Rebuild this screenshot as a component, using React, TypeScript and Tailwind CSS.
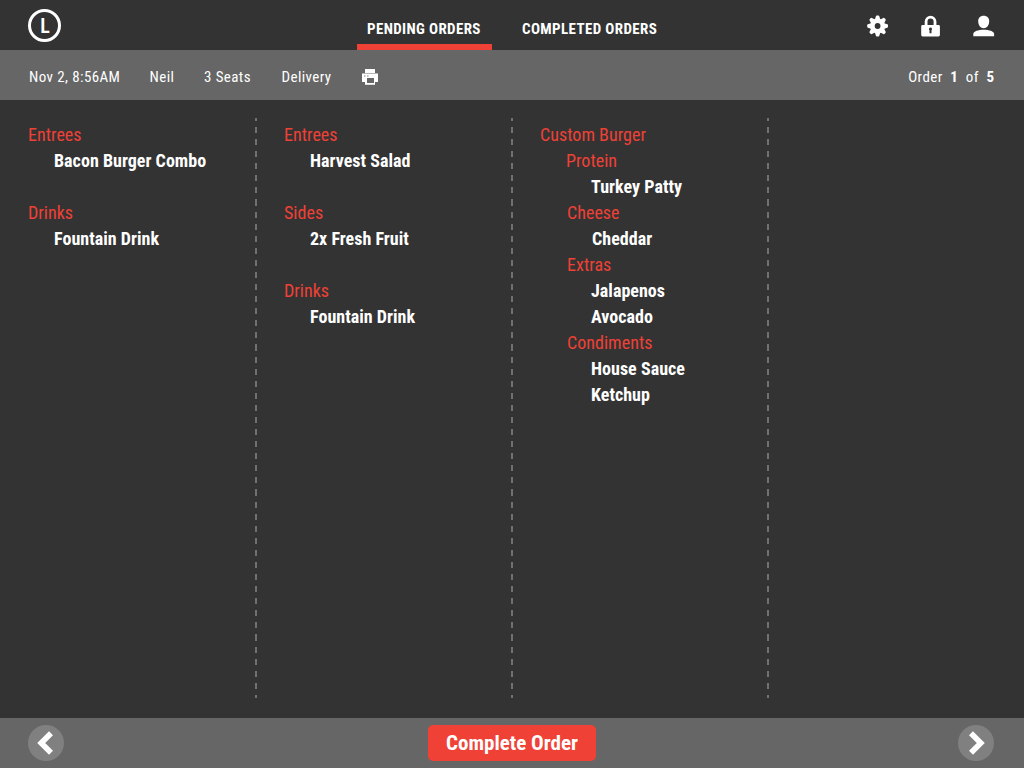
import React from "react";

type Line = { text: string; kind: "group" | "item" | "blank"; indent: string };

const g = (text: string, indent = "pl-0"): Line => ({ text, kind: "group", indent });
const i = (text: string, indent = "pl-[26px]"): Line => ({ text, kind: "item", indent });
const blank: Line = { text: "", kind: "blank", indent: "pl-0" };

const columns: Line[][] = [
  [g("Entrees"), i("Bacon Burger Combo"), blank, g("Drinks"), i("Fountain Drink")],
  [g("Entrees"), i("Harvest Salad"), blank, g("Sides"), i("2x Fresh Fruit"), blank, g("Drinks"), i("Fountain Drink")],
  [
    g("Custom Burger"),
    g("Protein", "pl-[26px]"),
    i("Turkey Patty", "pl-[51px]"),
    g("Cheese", "pl-[27px]"),
    i("Cheddar", "pl-[52px]"),
    g("Extras", "pl-[27px]"),
    i("Jalapenos", "pl-[51px]"),
    i("Avocado", "pl-[51px]"),
    g("Condiments", "pl-[27px]"),
    i("House Sauce", "pl-[51px]"),
    i("Ketchup", "pl-[51px]"),
  ],
  [],
];

function Gear() {
  return (
    <svg width="22" height="22" viewBox="-10.6 -11 22 22" fill="#fff">
      <circle r="5.2" fill="none" stroke="#fff" strokeWidth="4.6" />
      {[0, 45, 90, 135, 180, 225, 270, 315].map((a) => (
        <path key={a} transform={`rotate(${a})`} d="M-2.700-6.500L-1.700-9.700Q-1.500-10.400-.8-10.400H.8Q1.500-10.400 1.700-9.700L2.700-6.500z" />
      ))}
    </svg>
  );
}

function Lock() {
  return (
    <svg width="20" height="22" viewBox="0 0 20 22">
      <path d="M5.100 11V6.600a4.450 4.450 0 0 1 8.900 0V11" fill="none" stroke="#fff" strokeWidth="2.800" />
      <path
        fillRule="evenodd"
        fill="#fff"
        d="M1.600 10H17.500a1.400 1.400 0 0 1 1.400 1.400V20a1.400 1.400 0 0 1-1.400 1.400H1.600A1.400 1.400 0 0 1 .2 20V11.400A1.400 1.400 0 0 1 1.600 10zM9.500 12.400a1.600 1.600 0 0 0-1 2.800V18.200h2V15.200a1.600 1.600 0 0 0-1-2.800z"
      />
    </svg>
  );
}

function Person() {
  return (
    <svg width="22" height="22" viewBox="0 0 22 22" fill="#fff">
      <path d="M10.700.7c3.300 0 5.500 2.200 5.500 5.500 0 3.700-2.200 7-5.500 7s-5.500-3.300-5.500-7C5.200 2.900 7.400.7 10.700.7z" />
      <path d="M.3 21.300v-2.500c0-2.500 5-4.100 10.400-4.100s10.400 1.600 10.400 4.100v2.500z" />
    </svg>
  );
}

function Printer() {
  return (
    <svg width="16" height="16" viewBox="0 0 16 16" className="-mt-[2px]">
      <path d="M3 0H13V4H3z" fill="#fff" />
      <path d="M0 4H16V13H13V16H3V13H0z" fill="#fff" />
      <path d="M0 4H16V5H0z" fill="#b5b5b5" />
      <path d="M2 6.200h1.500V7.800H2zM5 6.200h1.500V7.800H5z" fill="#aaa" />
      <path d="M5 9H12V14H5z" fill="#666" />
      <path d="M3 15H13V16H3z" fill="#dcdcdc" />
    </svg>
  );
}

function Arrow({ flip = false }: { flip?: boolean }) {
  return (
    <button className="h-9 w-9 rounded-full bg-[#808080]">
      <svg width="36" height="36" viewBox="0 0 36 36" className={flip ? "-scale-x-100" : ""}>
        <path d="M23 8.200L13.200 18L23 27.800" fill="none" stroke="#fff" strokeWidth="5.600" />
      </svg>
    </button>
  );
}

export default function App() {
  return (
    <div className="flex h-[768px] w-[1024px] flex-col overflow-hidden bg-[#333] font-['Roboto_Condensed','Roboto',sans-serif] text-white [font-stretch:75%]">
      <header className="flex h-[50px] justify-between pl-7 pr-[29px]">
        <div className="mt-[9px] flex h-[33px] w-[330px]">
          <div className="flex h-[33px] w-[33px] items-center justify-center rounded-full border-3 border-white pl-px text-[20px] font-semibold leading-none">L</div>
        </div>
        <nav className="flex gap-[20px] text-[15px] font-bold">
          <div className="h-[50px] w-[135px] border-b-6 border-[#ef4136] pl-[10.500px] pt-[17px] leading-6 whitespace-nowrap tracking-[0.37px]">PENDING ORDERS</div>
          <div className="h-[50px] w-[155px] pl-[10.500px] pt-[17px] leading-6 whitespace-nowrap tracking-[0.37px]">COMPLETED ORDERS</div>
        </nav>
        <div className="flex w-[330px] items-start justify-end gap-8 pt-[15px]">
          <Gear />
          <Lock />
          <Person />
        </div>
      </header>
      <section className="flex h-[50px] items-center bg-[#666] pl-[29px] pr-[29.500px] pt-[5px] text-[15px] tracking-[0.4px]">
        <span className="w-[120.5px]">Nov 2, 8:56AM</span>
        <span className="w-[54.5px]">Neil</span>
        <span className="w-[77.500px]">3 Seats</span>
        <span className="w-[80.500px]">Delivery</span>
        <Printer />
        <div className="ml-auto flex gap-[7.600px]">
          <span>Order</span>
          <b>1</b>
          <span>of</span>
          <b>5</b>
        </div>
      </section>
      <main className="grid h-[618px] grid-cols-4">
        {columns.map((lines, c) => (
          <div key={c} className="flex justify-between pl-7 pt-[18px]">
            <div className="pt-[4px] text-lg leading-[26px] tracking-[0.02px] whitespace-nowrap">
              {lines.map((l, n) => (
                <div key={n} className={`h-[26px] ${l.indent} ${l.kind === "item" ? "font-bold" : "text-[#ef4136]"}`}>
                  {l.text}
                </div>
              ))}
            </div>
            {c < 3 && (
              <div className="-mr-px h-[580px] w-0.5 bg-[repeating-linear-gradient(to_bottom,#707070_0px,#707070_3px,transparent_3px,transparent_9px,#707070_9px,#707070_12.083px)]" />
            )}
          </div>
        ))}
      </main>
      <footer className="flex h-[50px] items-center bg-[#666] pl-7 pr-[30px]">
        <Arrow />
        <button className="ml-[364px] mr-auto h-9 w-[168px] rounded-[5px] bg-[#ef4136] text-[21px] font-bold leading-9">Complete Order</button>
        <Arrow flip />
      </footer>
    </div>
  );
}
